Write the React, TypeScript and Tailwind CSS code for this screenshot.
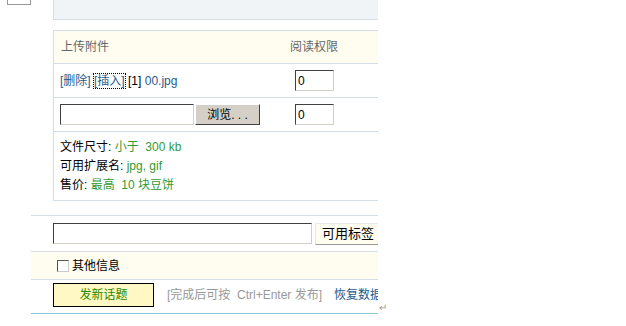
import { type FC } from 'react';

const insetBox =
  'border border-t-[#404040] border-l-[#404040] border-r-[#d4d0c8] border-b-[#d4d0c8] bg-white';

const PermInput: FC = () => (
  <div className={`w-[39px] h-[21px] ${insetBox} flex items-center pl-[2px] text-[12px] text-black`}>0</div>
);

const App: FC = () => {
  return (
    <div className="w-[626px] h-[326px] bg-white flex items-start overflow-hidden font-['Liberation_Sans','Noto_Sans_CJK_SC',sans-serif] text-[12px] text-[#333]">
      <div className="w-[378px] shrink-0 overflow-hidden">
        {/* 위쪽: 잘린 박스 + 회색 패널 */}
        <div className="grid grid-cols-[7px_24px_22px_1fr] h-[20px]">
          <div />
          <div className="h-[5px] border-x border-b border-[#999]" />
          <div />
          <div className="h-[20px] bg-[#f1f4f7] border-l border-b border-[#d5dde6]" />
        </div>

        {/* 첨부 테이블 */}
        <div className="mt-[10px] ml-[53px] w-[400px] border-l border-t border-b border-[#d5dde6]">
          <div className="flex items-center h-[33px] bg-[#fffdf0] border-b border-[#d5dde6] text-[#666]">
            <div className="w-[236px] pl-[7px]">上传附件</div>
            <div>阅读权限</div>
          </div>

          <div className="flex items-center h-[34px] border-b border-[#d5dde6]">
            <div className="w-[236px] pl-[6px] whitespace-nowrap text-[#1e5b8c]">
              <span>[删除]</span>{' '}
              <span className="outline-1 outline-dotted outline-black">[插入]</span>{' '}
              <span className="text-black">[1]</span>{' '}
              <span>00.jpg</span>
            </div>
            <div className="pl-[5px]">
              <PermInput />
            </div>
          </div>

          <div className="flex items-center h-[34px] border-b border-[#d5dde6]">
            <div className="w-[236px] pl-[6px] flex items-center">
              <div className={`w-[134px] h-[21px] ${insetBox}`} />
              <div className="ml-[1px] w-[65px] h-[21px] bg-[#d4d0c8] border border-t-white border-l-white border-r-[#404040] border-b-[#404040] flex items-center justify-center text-black">
                浏览. . .
              </div>
            </div>
            <div className="pl-[5px]">
              <PermInput />
            </div>
          </div>

          <div className="h-[68px] py-[6px] pl-[6px] leading-[19px] text-black">
            <div>
              文件尺寸: <span className="text-[#339933]">小于&nbsp; 300 kb</span>
            </div>
            <div>
              可用扩展名: <span className="text-[#339933]">jpg, gif</span>
            </div>
            <div>
              售价: <span className="text-[#339933]">最高&nbsp; 10 块豆饼</span>
            </div>
          </div>
        </div>

        {/* 아래쪽 폼 */}
        <div className="mt-[14px] ml-[31px] w-[400px] border-t border-[#d5dde6]">
          <div className="h-[36px] pt-[7px] pl-[22px] flex items-start border-b border-[#d5dde6]">
            <div className={`w-[259px] h-[21px] ${insetBox}`} />
            <div className="ml-[3px] w-[66px] h-[22px] bg-[#fffcf0] border border-t-[#e8e8e8] border-l-[#e8e8e8] border-r-[#999] border-b-[#999] flex items-center justify-center text-black text-[13px]">
              可用标签
            </div>
          </div>

          <div className="h-[28px] bg-[#fffcf0] border-b border-[#d5dde6] flex items-center pl-[26px] text-black">
            <span className="w-[12px] h-[12px] border border-t-[#555] border-l-[#555] border-r-[#ccc] border-b-[#ccc] bg-white" />
            <span className="ml-[3px]">其他信息</span>
          </div>

          <div className="h-[34px] pt-[3px] pl-[22px] border-b border-[#8ac6d8] flex items-start whitespace-nowrap">
            <div className="w-[101px] h-[24px] bg-[#fff8c4] border border-black flex items-center justify-center text-[#2a8a00]">
              发新话题
            </div>
            <div className="h-[24px] flex items-center ml-[13px] text-[#999]">[完成后可按&nbsp; Ctrl+Enter 发布]</div>
            <div className="h-[24px] flex items-center ml-[12px] text-[#1e5b8c]">恢复数据</div>
          </div>
        </div>
      </div>
      <span className="mt-[303px] ml-[1px] text-[10px] text-[#999] leading-none">↵</span>
    </div>
  );
};

export default App;
